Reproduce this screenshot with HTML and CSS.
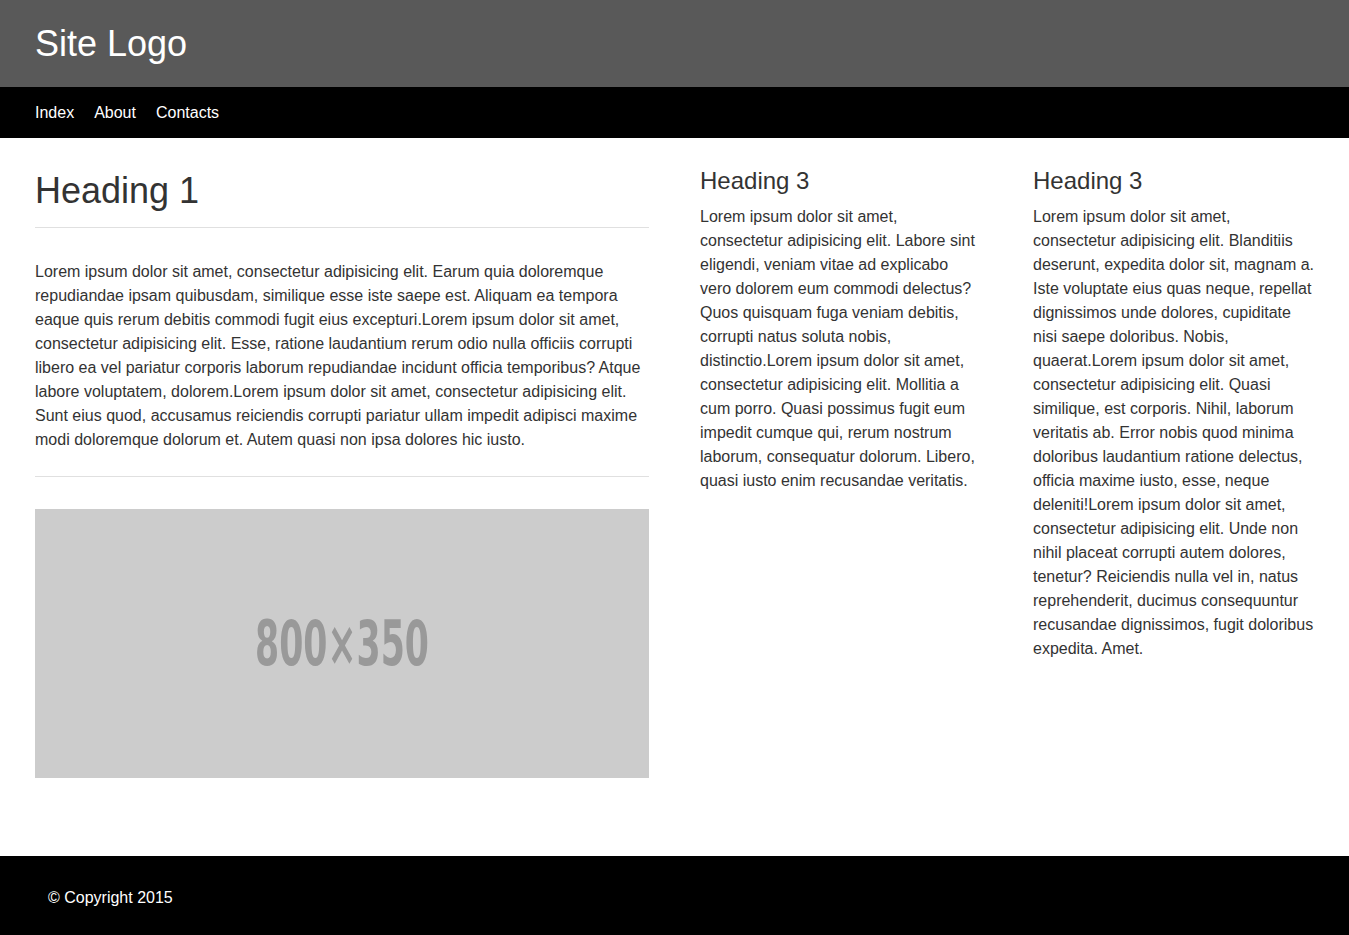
FILE: index.html
```html
<!DOCTYPE HTML>
<html lang="en">
<head>
  <meta charset="UTF-8">
  <meta name="viewport" content="width=device-width, initial-scale=1.0">
  <title>Site Logo</title>
  <link rel="stylesheet" href="styles.css">
</head>
<body>
  <!-- Header -->
  <header class="site-header">
    <div class="logo">Site Logo</div>
  </header>
  <nav class="site-nav">
    <a href="#">Index</a>
    <a href="#">About</a>
    <a href="#">Contacts</a>
  </nav>

  <!-- Content -->
  <main class="content">
    <section class="col-main">
      <h1>Heading 1</h1>
      <hr>
      <p>Lorem ipsum dolor sit amet, consectetur adipisicing elit. Earum quia doloremque repudiandae ipsam quibusdam, similique esse iste saepe est. Aliquam ea tempora eaque quis rerum debitis commodi fugit eius excepturi.Lorem ipsum dolor sit amet, consectetur adipisicing elit. Esse, ratione laudantium rerum odio nulla officiis corrupti libero ea vel pariatur corporis laborum repudiandae incidunt officia temporibus? Atque labore voluptatem, dolorem.Lorem ipsum dolor sit amet, consectetur adipisicing elit. Sunt eius quod, accusamus reiciendis corrupti pariatur ullam impedit adipisci maxime modi doloremque dolorum et. Autem quasi non ipsa dolores hic iusto.</p>
      <hr>
      <div class="placeholder">
        <svg class="placeholder-label" width="180" height="50" viewBox="0 0 180 50">
          <text x="3" y="47" font-size="62" textLength="174" lengthAdjust="spacingAndGlyphs" font-family="DejaVu Sans Condensed, DejaVu Sans, sans-serif" font-weight="bold" fill="#999">800×350</text>
        </svg>
      </div>
    </section>
    <section class="col-side">
      <h3>Heading 3</h3>
      <p>Lorem ipsum dolor sit amet, consectetur adipisicing elit. Labore sint eligendi, veniam vitae ad explicabo vero dolorem eum commodi delectus? Quos quisquam fuga veniam debitis, corrupti natus soluta nobis, distinctio.Lorem ipsum dolor sit amet, consectetur adipisicing elit. Mollitia a cum porro. Quasi possimus fugit eum impedit cumque qui, rerum nostrum laborum, consequatur dolorum. Libero, quasi iusto enim recusandae veritatis.</p>
    </section>
    <section class="col-side">
      <h3>Heading 3</h3>
      <p>Lorem ipsum dolor sit amet, consectetur adipisicing elit. Blanditiis deserunt, expedita dolor sit, magnam a. Iste voluptate eius quas neque, repellat dignissimos unde dolores, cupiditate nisi saepe doloribus. Nobis, quaerat.Lorem ipsum dolor sit amet, consectetur adipisicing elit. Quasi similique, est corporis. Nihil, laborum veritatis ab. Error nobis quod minima doloribus laudantium ratione delectus, officia maxime iusto, esse, neque deleniti!Lorem ipsum dolor sit amet, consectetur adipisicing elit. Unde non nihil placeat corrupti autem dolores, tenetur? Reiciendis nulla vel in, natus reprehenderit, ducimus consequuntur recusandae dignissimos, fugit doloribus expedita. Amet.</p>
    </section>
  </main>

  <!-- Footer -->
  <footer class="site-footer">
    &copy; Copyright 2015
  </footer>
</body>
</html>
```

FILE: styles.css
```css
body {
  font-family: 'Liberation Sans', Arial, sans-serif;
  font-size: 16px;
  line-height: 24px;
  color: #333;
  background: #fff;
  margin: 0;
  padding: 0;
}
.site-header {
  background-color: #595959;
  height: 87px;
  padding: 0 35px;
  display: flex;
  align-items: center;
}
.logo {
  color: #fff;
  font-size: 36px;
  line-height: 40px;
}
.site-nav {
  background-color: #000;
  height: 51px;
  padding: 0 35px;
  display: flex;
  align-items: center;
  gap: 20px;
}
.site-nav a {
  color: #fff;
  text-decoration: none;
}
.content {
  display: grid;
  grid-template-columns: 614px 282px 282px;
  column-gap: 51px;
  align-items: start;
  padding: 29px 34px 78px 35px;
}
h1 {
  font-size: 36px;
  line-height: 40px;
  font-weight: normal;
  margin: 0;
  padding-top: 4px;
}
h3 {
  font-size: 24px;
  line-height: 27px;
  font-weight: normal;
  margin: 0 0 11px;
}
hr {
  border: 0;
  border-top: 1px solid #e0e0e0;
  margin: 16px 0 32px;
}
.col-main p {
  margin: 0 0 24px;
}
.col-main hr + .placeholder {
  margin-top: 32px;
}
.col-main p + hr {
  margin: 0;
}
.col-side p {
  margin: 0;
}
.placeholder {
  background-color: #ccc;
  aspect-ratio: 800 / 350;
  display: flex;
  align-items: center;
  justify-content: center;
}
.placeholder-label {
  overflow: visible;
}
.site-footer {
  background-color: #000;
  color: #fff;
  padding: 30px 48px 25px;
}
```
